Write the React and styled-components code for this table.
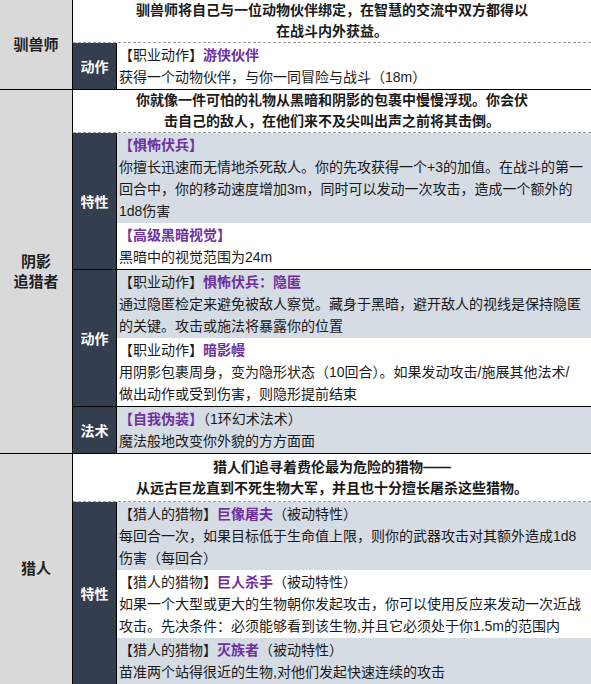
import React from "react";
import styled, { createGlobalStyle } from "styled-components";

const Global = createGlobalStyle`
  html, body { margin: 0; padding: 0; background: #fff; }
  body { font-family: "Liberation Sans", "Noto Sans CJK SC", sans-serif; color: #1a1a1a; }
`;

const Table = styled.div`
  width: 591px;
  display: flex;
  flex-direction: column;
`;

const Section = styled.section`
  display: grid;
  grid-template-columns: 73px 1fr;
  border-bottom: 1px solid #000;
`;

const ClassCell = styled.div`
  background: #d9d9d9;
  border-right: 1px solid #000;
  display: flex;
  align-items: center;
  justify-content: center;
  text-align: center;
  font-size: 15px;
  font-weight: 700;
  line-height: 20px;
  color: #1f1f1f;
`;

const Body = styled.div`
  display: flex;
  flex-direction: column;
  min-width: 0;
`;

const Intro = styled.div`
  background: #fff;
  text-align: center;
  font-size: 14px;
  font-weight: 700;
  line-height: 21px;
  padding: ${(p) => (p.$tall ? "3px 0 2px" : "0")};
  border-bottom: 1px dashed #a0a0a0;
`;

const Group = styled.div`
  display: grid;
  grid-template-columns: 44px 1fr;
  & + & { border-top: 1px solid #000; }
`;

const GroupLabel = styled.div`
  background: #333f4f;
  color: #fff;
  border-right: 1px solid #000;
  display: flex;
  align-items: center;
  justify-content: center;
  font-size: 14px;
  font-weight: 700;
`;

const Entries = styled.div`
  display: flex;
  flex-direction: column;
`;

const Entry = styled.div`
  background: ${(p) => (p.$shaded ? "#d6dce4" : "#fff")};
  padding: 1px 0 1px 2px;
  font-size: 14px;
  line-height: 22px;
  color: #1a1a1a;
`;

const Title = styled.span`
  color: #7030a0;
  font-weight: 700;
`;

const Tag = styled.span`
  color: #1a1a1a;
`;

const data = [
  {
    name: ["驯兽师"],
    intro: ["驯兽师将自己与一位动物伙伴绑定，在智慧的交流中双方都得以", "在战斗内外获益。"],
    groups: [
      {
        label: "动作",
        entries: [
          { shaded: false, tag: "【职业动作】", title: "游侠伙伴", lines: ["获得一个动物伙伴，与你一同冒险与战斗（18m）"] },
        ],
      },
    ],
  },
  {
    name: ["阴影", "追猎者"],
    intro: ["你就像一件可怕的礼物从黑暗和阴影的包裹中慢慢浮现。你会伏", "击自己的敌人，在他们来不及尖叫出声之前将其击倒。"],
    groups: [
      {
        label: "特性",
        entries: [
          {
            shaded: true,
            title: "【惧怖伏兵】",
            lines: [
              "你擅长迅速而无情地杀死敌人。你的先攻获得一个+3的加值。在战斗的第一",
              "回合中，你的移动速度增加3m，同时可以发动一次攻击，造成一个额外的",
              "1d8伤害",
            ],
          },
          { shaded: false, title: "【高级黑暗视觉】", lines: ["黑暗中的视觉范围为24m"] },
        ],
      },
      {
        label: "动作",
        entries: [
          {
            shaded: true,
            tag: "【职业动作】",
            title: "惧怖伏兵：隐匿",
            lines: ["通过隐匿检定来避免被敌人察觉。藏身于黑暗，避开敌人的视线是保持隐匿", "的关键。攻击或施法将暴露你的位置"],
          },
          {
            shaded: false,
            tag: "【职业动作】",
            title: "暗影幔",
            lines: ["用阴影包裹周身，变为隐形状态（10回合）。如果发动攻击/施展其他法术/", "做出动作或受到伤害，则隐形提前结束"],
          },
        ],
      },
      {
        label: "法术",
        entries: [
          { shaded: true, title: "【自我伪装】", after: "（1环幻术法术）", lines: ["魔法般地改变你外貌的方方面面"] },
        ],
      },
    ],
  },
  {
    name: ["猎人"],
    tall: true,
    intro: ["猎人们追寻着费伦最为危险的猎物——", "从远古巨龙直到不死生物大军，并且也十分擅长屠杀这些猎物。"],
    groups: [
      {
        label: "特性",
        entries: [
          {
            shaded: true,
            tag: "【猎人的猎物】",
            title: "巨像屠夫",
            after: "（被动特性）",
            lines: ["每回合一次，如果目标低于生命值上限，则你的武器攻击对其额外造成1d8", "伤害（每回合）"],
          },
          {
            shaded: false,
            tag: "【猎人的猎物】",
            title: "巨人杀手",
            after: "（被动特性）",
            lines: ["如果一个大型或更大的生物朝你发起攻击，你可以使用反应来发动一次近战", "攻击。先决条件：必须能够看到该生物,并且它必须处于你1.5m的范围内"],
          },
          {
            shaded: true,
            tag: "【猎人的猎物】",
            title: "灭族者",
            after: "（被动特性）",
            lines: ["苗准两个站得很近的生物,对他们发起快速连续的攻击"],
          },
        ],
      },
    ],
  },
];

function Lines({ lines }) {
  return lines.map((l, i) => (
    <React.Fragment key={i}>
      <br />
      {l}
    </React.Fragment>
  ));
}

export default function App() {
  return (
    <>
      <Global />
      <Table>
        {data.map((s, si) => (
          <Section key={si}>
            <ClassCell>
              <div>
                {s.name.map((n, i) => (
                  <div key={i}>{n}</div>
                ))}
              </div>
            </ClassCell>
            <Body>
              <Intro $tall={s.tall}>
                {s.intro[0]}
                <br />
                {s.intro[1]}
              </Intro>
              {s.groups.map((g, gi) => (
                <Group key={gi}>
                  <GroupLabel>{g.label}</GroupLabel>
                  <Entries>
                    {g.entries.map((e, ei) => (
                      <Entry key={ei} $shaded={e.shaded}>
                        {e.tag && <Tag>{e.tag}</Tag>}
                        <Title>{e.title}</Title>
                        {e.after && <Tag>{e.after}</Tag>}
                        <Lines lines={e.lines} />
                      </Entry>
                    ))}
                  </Entries>
                </Group>
              ))}
            </Body>
          </Section>
        ))}
      </Table>
    </>
  );
}
